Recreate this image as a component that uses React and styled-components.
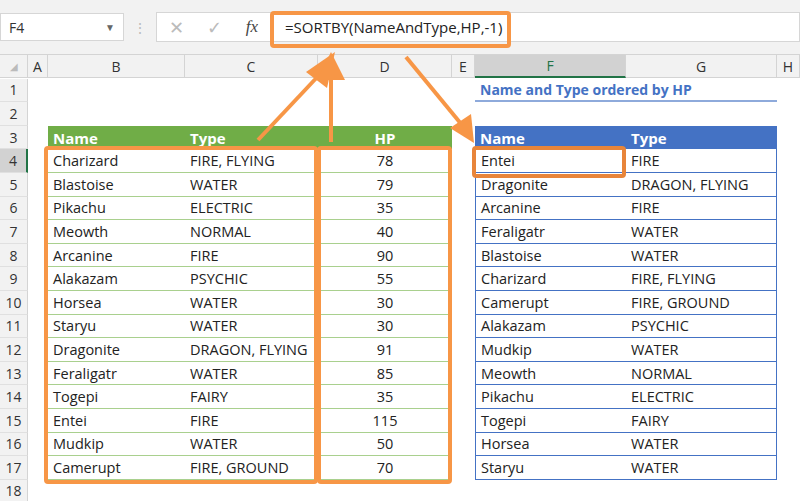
import React from "react";
import styled, { createGlobalStyle } from "styled-components";

const G = createGlobalStyle`
  html,body{margin:0;padding:0;background:#fff;overflow:hidden;}
  body{font-family:"Open Sans","Noto Sans",sans-serif;}
`;
const Page = styled.div`position:relative;width:800px;height:501px;overflow:hidden;background:#fff;`;
const Top = styled.div`height:55px;background:#f2f2f2;display:flex;align-items:center;gap:8px;border-bottom:1px solid #d4d4d4;box-sizing:border-box;`;
const NameBox = styled.div`width:124px;height:28px;background:#fff;border:1px solid #d6d6d6;display:flex;align-items:center;justify-content:space-between;padding:0 8px;box-sizing:border-box;font-size:14px;color:#333;`;
const Dots = styled.div`color:#bbb;font-size:14px;width:16px;text-align:center;`;
const Formula = styled.div`flex:1;height:28px;background:#fff;border:1px solid #d6d6d6;display:flex;align-items:center;font-size:15px;color:#222;`;
const Ico = styled.span`width:38px;text-align:center;color:${p=>p.c||"#bbb"};font-size:${p=>p.s||18}px;font-style:${p=>p.i?"italic":"normal"};font-family:${p=>p.i?'"Liberation Serif",serif':"inherit"};`;
const Grid = styled.div`display:grid;grid-template-columns:28px 20px 137px 133px 134px 23px 151px 151px 23px;grid-auto-rows:23.6px;`;
const ColH = styled.div`background:${p=>p.sel?"#d2d2d2":"#f2f2f2"};border-right:1px solid #d4d4d4;border-bottom:${p=>p.sel?"2px solid #217346":"1px solid #d4d4d4"};display:flex;align-items:center;justify-content:center;font-size:14px;color:${p=>p.sel?"#217346":"#333"};box-sizing:border-box;height:23px;`;
const RowH = styled.div`background:${p=>p.sel?"#d2d2d2":"#f2f2f2"};border-right:${p=>p.sel?"2px solid #217346":"1px solid #d4d4d4"};border-bottom:1px solid #e0e0e0;display:flex;align-items:center;justify-content:center;font-size:14px;color:#333;box-sizing:border-box;`;
const Cell = styled.div`
  box-sizing:border-box;display:flex;align-items:center;padding:0 5px;font-size:14.5px;color:#222;white-space:nowrap;
  justify-content:${p=>p.center?"center":"flex-start"};
  background:${p=>p.hd==="g"?"#70ad47":p.hd==="b"?"#4472c4":"#fff"};
  ${p=>p.hd?"color:#fff;font-weight:700;font-size:15px;":""}
  border-bottom:${p=>p.line?`1px solid ${p.line}`:"none"};
  ${p=>p.line==="#4472c4"&&p.edgeL?"border-left:1px solid #4472c4;":""}
  ${p=>p.line==="#4472c4"&&p.edgeR?"border-right:1px solid #4472c4;":""}
`;
const Title = styled(Cell)`color:#4472c4;font-weight:700;font-size:14px;border-bottom:2px solid #8eaadb;grid-column:span 2;`;
const Overlay = styled.svg`position:absolute;left:0;top:0;pointer-events:none;`;

const left = [["Charizard","FIRE, FLYING",78],["Blastoise","WATER",79],["Pikachu","ELECTRIC",35],["Meowth","NORMAL",40],["Arcanine","FIRE",90],["Alakazam","PSYCHIC",55],["Horsea","WATER",30],["Staryu","WATER",30],["Dragonite","DRAGON, FLYING",91],["Feraligatr","WATER",85],["Togepi","FAIRY",35],["Entei","FIRE",115],["Mudkip","WATER",50],["Camerupt","FIRE, GROUND",70]];
const right = [["Entei","FIRE"],["Dragonite","DRAGON, FLYING"],["Arcanine","FIRE"],["Feraligatr","WATER"],["Blastoise","WATER"],["Charizard","FIRE, FLYING"],["Camerupt","FIRE, GROUND"],["Alakazam","PSYCHIC"],["Mudkip","WATER"],["Meowth","NORMAL"],["Pikachu","ELECTRIC"],["Togepi","FAIRY"],["Horsea","WATER"],["Staryu","WATER"]];
const cols=["","A","B","C","D","E","F","G","H"];
const O="#f79646";

export default function App(){
  const rows=[];
  for(let r=1;r<=18;r++){
    rows.push(<RowH key={"h"+r} sel={r===4}>{r}</RowH>);
    rows.push(<Cell key={"a"+r}/>);
    if(r===1){rows.push(<Cell key="b1"/>,<Cell key="c1"/>,<Cell key="d1"/>,<Cell key="e1"/>,<Title key="t">Name and Type ordered by HP</Title>,<Cell key="h1"/>);continue;}
    if(r===2){rows.push(...["b","c","d","e","f","g","h"].map(k=><Cell key={k+"2"}/>));continue;}
    if(r===3){rows.push(<Cell key="b3" hd="g">Name</Cell>,<Cell key="c3" hd="g">Type</Cell>,<Cell key="d3" hd="g" center>HP</Cell>,<Cell key="e3"/>,<Cell key="f3" hd="b">Name</Cell>,<Cell key="g3" hd="b">Type</Cell>,<Cell key="h3"/>);continue;}
    const L=left[r-4],R=right[r-4];
    if(!L){rows.push(...["b","c","d","e","f","g","h"].map(k=><Cell key={k+r}/>));continue;}
    rows.push(<Cell key={"b"+r} line="#a9d08e">{L[0]}</Cell>,<Cell key={"c"+r} line="#a9d08e">{L[1]}</Cell>,<Cell key={"d"+r} line="#a9d08e" center>{L[2]}</Cell>,<Cell key={"e"+r}/>,<Cell key={"f"+r} line="#4472c4" edgeL>{R[0]}</Cell>,<Cell key={"g"+r} line="#4472c4" edgeR>{R[1]}</Cell>,<Cell key={"hh"+r}/>);
  }
  return <Page><G/>
    <Top>
      <NameBox><span>F4</span><span style={{fontSize:10,color:"#666"}}>▼</span></NameBox>
      <Dots>⋮</Dots>
      <Formula>
        <Ico>✕</Ico><Ico>✓</Ico><Ico i c="#444" s={17}>fx</Ico>
        <span style={{paddingLeft:14}}>=SORTBY(NameAndType,HP,-1)</span>
      </Formula>
    </Top>
    <Grid>
      {cols.map((c,i)=><ColH key={c+i} sel={c==="F"}>{i===0?<span style={{color:"#bbb",fontSize:10}}>◢</span>:c}</ColH>)}
      {rows}
    </Grid>
    <Overlay width="800" height="501" viewBox="0 0 800 501">
      <g fill="none" stroke={O} strokeWidth="4">
        <rect x="272" y="13" width="237" height="33" rx="2"/>
        <rect x="46" y="148" width="270" height="334" rx="2"/>
        <rect x="319" y="148" width="131" height="334" rx="2"/>
        <rect x="474" y="148" width="150" height="28" stroke="#e8853a" rx="2"/>
        <line x1="258" y1="140" x2="322" y2="72"/>
        <line x1="331" y1="142" x2="331" y2="74"/>
        <line x1="406" y1="57" x2="462" y2="125"/>
      </g>
      <g fill={O}>
        <polygon points="335,52 306,72 327,88"/>
        <polygon points="331,52 317,80 345,80"/>
        <polygon points="474,143 450,128 471,114"/>
      </g>
    </Overlay>
  </Page>;
}
